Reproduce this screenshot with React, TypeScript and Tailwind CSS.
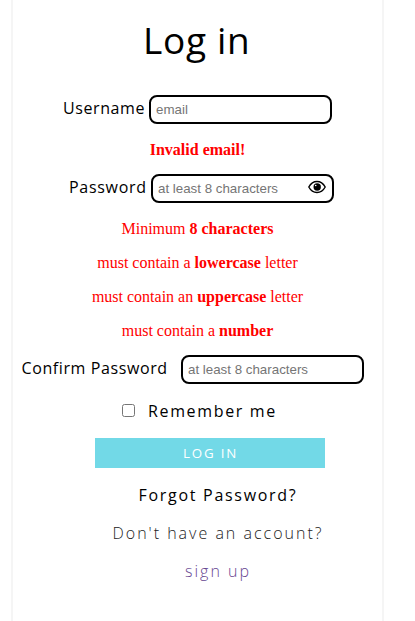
import React from "react";

const inputClass =
  "block h-[29px] w-[183px] rounded-lg border-2 border-black bg-white px-[5px] pb-[1px] font-['Liberation_Sans',Arial,sans-serif] text-[13.333px] text-black outline-none placeholder:text-[#757575]";

function Rule({ children }: { children: React.ReactNode }) {
  return (
    <p className="h-[34px] text-center font-['Liberation_Serif','Times_New_Roman',serif] text-base leading-[20px] text-[#ff0000]">
      {children}
    </p>
  );
}

function EyeIcon() {
  return (
    <svg viewBox="0 0 18 14" className="h-[14px] w-[18px]" fill="none" stroke="black" strokeWidth="1.4">
      <path d="M.8 7C2.700 3.500 5.500 1.500 9 1.500S15.300 3.500 17.200 7C15.300 10.500 12.500 12.500 9 12.500S2.700 10.500.8 7Z" />
      <circle cx="9.200" cy="7" r="3.700" fill="black" stroke="none" />
      <circle cx="7.700" cy="5.500" r=".8" fill="white" stroke="none" />
    </svg>
  );
}

export default function App() {
  return (
    <main className="ml-[11px] h-[621px] w-[373px] overflow-hidden border-x-2 border-[#f5f5f5] bg-white font-['Open_Sans',sans-serif] text-base text-black">
      <h1 className="h-[95px] pl-[130px] pt-[13px] text-[37px] leading-[54px] tracking-[0.7px]">Log in</h1>

      <div className="flex h-[45px] pl-[50px]">
        <label htmlFor="email" className="w-[86px] leading-[27px] tracking-[0.6px] whitespace-nowrap">Username</label>
        <input id="email" className={inputClass} placeholder="email" />
      </div>
      <Rule><b>Invalid email!</b></Rule>

      <div className="flex h-[45px] pl-[56px]">
        <label htmlFor="password" className="w-[82px] leading-[27px] tracking-[0.7px] whitespace-nowrap">Password</label>
        <div className="relative">
          <input id="password" className={inputClass} placeholder="at least 8 characters" />
          <button aria-label="Show password" className="absolute left-[157px] top-[6px]"><EyeIcon /></button>
        </div>
      </div>
      <Rule>Minimum <b>8 characters</b></Rule>
      <Rule>must contain a <b>lowercase</b> letter</Rule>
      <Rule>must contain an <b>uppercase</b> letter</Rule>
      <Rule>must contain a <b>number</b></Rule>

      <div className="flex h-[45px] pl-[8.500px]">
        <label htmlFor="confirm" className="w-[159.500px] leading-[27px] tracking-[0.600px] whitespace-nowrap">Confirm Password</label>
        <input id="confirm" className={inputClass} placeholder="at least 8 characters" />
      </div>

      <label className="flex h-[38px] pl-[109px] leading-[22px] tracking-[1.650px]">
        <input type="checkbox" className="mr-[13px] mt-[4px] h-[13px] w-[13px]" />
        Remember me
      </label>

      <button className="ml-[82px] block h-[30px] w-[230px] bg-[#72d9e7] pl-[1px] text-[13.333px] leading-[30px] tracking-[1.800px] text-white">LOG IN</button>

      <div className="flex w-[410px] flex-col items-center pt-[16px] leading-[22px] tracking-[2px]">
        <a className="mb-4 tracking-[1.700px]">Forgot Password?</a>
        <p className="mb-4 font-light text-[#222222]">Don't have an account?</p>
        <a className="font-light text-[#664590]">sign up</a>
      </div>
    </main>
  );
}
